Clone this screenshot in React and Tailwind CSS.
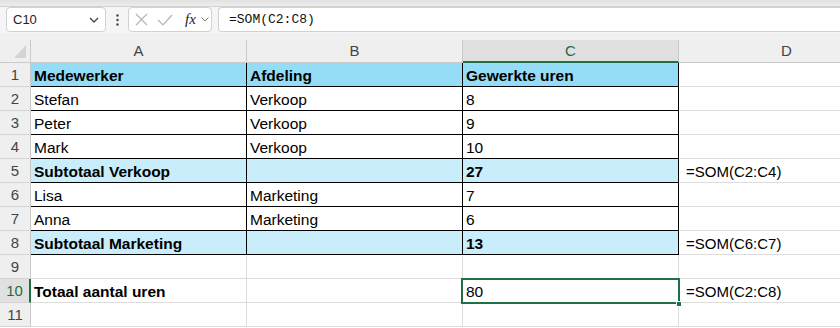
import React from "react";

const rows = [
  { a: "Medewerker", b: "Afdeling", c: "Gewerkte uren", d: "", fill: "bg-[#95dcf7]", bold: true, table: true },
  { a: "Stefan", b: "Verkoop", c: "8", d: "", table: true },
  { a: "Peter", b: "Verkoop", c: "9", d: "", table: true },
  { a: "Mark", b: "Verkoop", c: "10", d: "", table: true },
  { a: "Subtotaal Verkoop", b: "", c: "27", d: "=SOM(C2:C4)", fill: "bg-[#caedfb]", bold: true, table: true },
  { a: "Lisa", b: "Marketing", c: "7", d: "", table: true },
  { a: "Anna", b: "Marketing", c: "6", d: "", table: true },
  { a: "Subtotaal Marketing", b: "", c: "13", d: "=SOM(C6:C7)", fill: "bg-[#caedfb]", bold: true, table: true },
  { a: "", b: "", c: "", d: "" },
  { a: "Totaal aantal uren", b: "", c: "80", d: "=SOM(C2:C8)", boldA: true, selected: true },
  { a: "", b: "", c: "", d: "" },
];

function Cell({ children, table, fill, bold, selected, wide }) {
  return (
    <div
      className={
        "relative w-[216px] shrink-0 h-full border-r border-b flex items-center pt-[3px] whitespace-nowrap overflow-visible " +
        (wide ? "pl-[7px] text-[15px] " : "pl-[3px] text-[15.5px] ") +
        (table ? "border-black " : "border-[#dcdcdc] ") +
        (fill ? fill + " " : "bg-white ") +
        (bold ? "font-bold" : "")
      }
    >
      {children}
      {selected && (
        <>
          <div className="absolute left-[-2px] top-[-1px] right-[-2px] bottom-[-2px] border-2 border-[#1e7145] pointer-events-none z-10" />
          <div className="absolute right-[-4px] bottom-[-5px] w-[6px] h-[6px] bg-[#1e7145] border border-white z-20" />
        </>
      )}
    </div>
  );
}

export default function App() {
  return (
    <div className="w-[840px] h-[328px] overflow-hidden bg-white text-[15px] text-black" style={{ fontFamily: '"Liberation Sans", Arial, sans-serif' }}>
      {/* top strip */}
      <div className="h-[7px] bg-gradient-to-b from-[#e2e2e2] to-[#ededed] border-b border-[#d2d2d2]" />
      {/* formula bar */}
      <div className="h-[26px] flex items-stretch bg-[#f5f5f5]">
        <div className="ml-[6px] w-[100px] h-[25px] bg-white border border-[#d1d1d1] rounded-[4px] flex items-center justify-between pl-[6px] pr-[6px] text-[13px] text-[#222]">
          <span>C10</span>
          <svg width="10" height="6" viewBox="0 0 10 6"><path d="M1 1l4 4 4-4" fill="none" stroke="#444" strokeWidth="1.3" /></svg>
        </div>
        <div className="w-[22px] flex items-center justify-center">
          <svg width="3" height="12" viewBox="0 0 3 12"><circle cx="1.5" cy="1.5" r="1.2" fill="#444" /><circle cx="1.5" cy="6" r="1.2" fill="#444" /><circle cx="1.5" cy="10.5" r="1.2" fill="#444" /></svg>
        </div>
        <div className="w-[84px] h-[25px] bg-white border border-[#d1d1d1] rounded-[4px] flex items-center pl-[5px]">
          <svg width="13" height="13" viewBox="0 0 13 13" className="ml-[1px]"><path d="M1 1l11 11M12 1L1 12" stroke="#b4b4b4" strokeWidth="1.2" fill="none" /></svg>
          <svg width="16" height="12" viewBox="0 0 16 12" className="ml-[9px]"><path d="M1 6l5 5L15 1" stroke="#b4b4b4" strokeWidth="1.2" fill="none" /></svg>
          <span className="ml-[12px] italic text-[15px] text-[#222] leading-none" style={{ fontFamily: '"Liberation Serif", "Times New Roman", serif' }}>fx</span>
          <svg width="8" height="5" viewBox="0 0 8 5" className="ml-[5px]"><path d="M0.5 0.5l3.5 3.5 3.5-3.5" fill="none" stroke="#777" strokeWidth="1" /></svg>
        </div>
        <div className="ml-[6px] flex-1 h-[25px] bg-white border-y border-l border-[#d1d1d1] rounded-l-[4px] flex items-center pl-[10px] text-[13px] text-[#111]" style={{ fontFamily: '"Liberation Mono", "Courier New", monospace' }}>
          =SOM(C2:C8)
        </div>
      </div>
      <div className="h-[7px] bg-[#f0f0f0]" />
      {/* column headers */}
      <div className="h-[23px] flex bg-[#efefef] text-[#444]">
        <div className="w-[31px] shrink-0 h-full border-r border-b border-[#c9c9c9] relative">
          <div className="absolute right-[4px] bottom-[4px] w-0 h-0 border-l-[12px] border-l-transparent border-b-[13px] border-b-[#d4d4d4]" />
        </div>
        <div className="w-[216px] shrink-0 h-full border-r border-b border-[#c9c9c9] flex items-center justify-center pt-[1px]">A</div>
        <div className="w-[216px] shrink-0 h-full border-r border-b border-[#c9c9c9] flex items-center justify-center pt-[1px]">B</div>
        <div className="w-[216px] shrink-0 h-full border-r border-b-2 border-r-[#c9c9c9] border-b-[#1e7145] bg-[#e0e0e0] flex items-center justify-center text-[#1e6b41] pt-[2px]">C</div>
        <div className="w-[216px] shrink-0 h-full border-r border-b border-[#c9c9c9] flex items-center justify-center pt-[1px]">D</div>
      </div>
      {/* rows */}
      {rows.map((r, i) => (
        <div key={i} className="h-[24px] flex">
          <div
            className={
              "w-[31px] shrink-0 h-full border-b flex items-center justify-center pt-[2px] border-[#d4d4d4] " +
              (r.selected ? "bg-[#e0e0e0] text-[#1e6b41] border-r-2 border-r-[#1e7145]" : "bg-[#efefef] text-[#444] border-r border-r-[#c9c9c9]")
            }
          >
            {i + 1}
          </div>
          <Cell table={r.table} fill={r.fill} bold={r.bold || r.boldA}>{r.a}</Cell>
          <Cell table={r.table} fill={r.fill} bold={r.bold}>{r.b}</Cell>
          <Cell table={r.table} fill={r.fill} bold={r.bold} selected={r.selected}>{r.c}</Cell>
          <Cell wide>{r.d}</Cell>
        </div>
      ))}
    </div>
  );
}
